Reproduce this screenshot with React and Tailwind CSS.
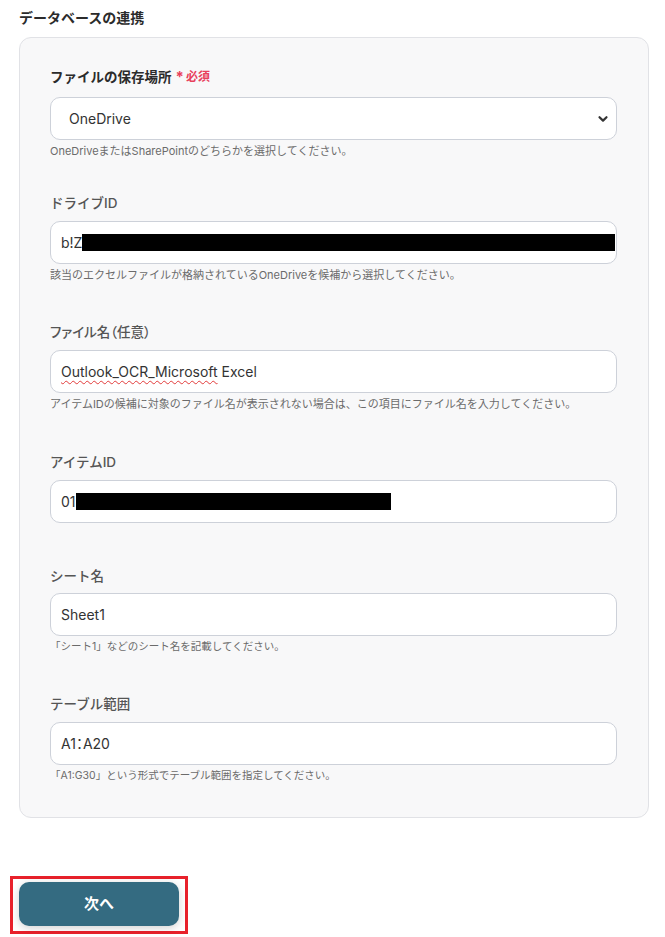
import React from "react";

const fields = [
  {
    id: "location",
    label: "ファイルの保存場所",
    required: true,
    select: true,
    value: "OneDrive",
    help: "OneDriveまたはSharePointのどちらかを選択してください。",
    labelGap: "mb-[10px]",
    after: "mb-[34px]",
  },
  {
    id: "drive",
    label: "ドライブID",
    value: "b!Z",
    redact: "flex-1 -mr-[9px]",
    help: "該当のエクセルファイルが格納されているOneDriveを候補から選択してください。",
    labelGap: "mb-[8px]",
    after: "mb-[39px]",
  },
  {
    id: "file",
    label: "ファイル名（任意）",
    labelPalt: true,
    value: "Outlook_OCR_Microsoft",
    suffix: " Excel",
    wavy: true,
    help: "アイテムIDの候補に対象のファイル名が表示されない場合は、この項目にファイル名を入力してください。",
    labelGap: "mb-[8px]",
    after: "mb-[40px]",
  },
  {
    id: "item",
    label: "アイテムID",
    value: "01",
    redact: "w-[315px]",
    labelGap: "mb-[8px]",
    after: "mb-[43px]",
  },
  {
    id: "sheet",
    label: "シート名",
    value: "Sheet1",
    help: "「シート1」などのシート名を記載してください。",
    small: true,
    labelGap: "mb-[7px]",
    after: "mb-[39px]",
  },
  {
    id: "range",
    label: "テーブル範囲",
    value: "A1：A20",
    valuePalt: true,
    help: "「A1:G30」という形式でテーブル範囲を指定してください。",
    small: true,
    labelGap: "mb-[8px]",
    after: "",
  },
];

const Field = ({ field, first }) => {
  return (
    <div className={field.after}>
      <div className={`flex items-center h-[20px] ${field.labelGap}`}>
        <span
          className={`${
            first
              ? "text-[13.5px] font-bold text-[#2b2b2b]"
              : "text-[13.5px] font-medium text-[#555]"
          } ${field.labelPalt ? "[font-feature-settings:'palt']" : ""}`}
        >
          {field.label}
        </span>
        {field.required && (
          <span className="ml-[4px] text-[12px] font-bold text-[#e8405c]">
            <span className="text-[15px] mr-[2px] align-[-1px]">*</span>必須
          </span>
        )}
      </div>

      {field.select ? (
        <div className="flex items-center justify-between h-[43px] rounded-[10px] border border-[#cdd1d9] bg-white pl-[18px] pr-[7px]">
          <span className="text-[14px] text-[#333]">{field.value}</span>
          <svg width="12" height="12" viewBox="0 0 12 12" fill="none">
            <path
              d="M2.5 4.2 L6 7.6 L9.5 4.2"
              stroke="#333"
              strokeWidth="2.2"
              strokeLinecap="round"
              strokeLinejoin="round"
            />
          </svg>
        </div>
      ) : (
        <div className="flex items-center h-[43px] rounded-[10px] border border-[#cdd1d9] bg-white px-[10px]">
          <span
            className={`text-[14px] text-[#333] whitespace-pre ${
              field.valuePalt ? "[font-feature-settings:'palt']" : ""
            }`}
          >
            {field.wavy ? (
              <span className="underline decoration-wavy decoration-[#e23b3b] underline-offset-[3px] decoration-1">
                {field.value}
              </span>
            ) : (
              field.value
            )}
            {field.suffix}
          </span>
          {field.redact && (
            <div className={`h-[17px] bg-black ${field.redact}`} />
          )}
        </div>
      )}

      {field.help && (
        <p
          className={`mt-[3px] leading-[16px] text-[#6b6b6b] ${
            field.small ? "text-[10.5px]" : "text-[11px]"
          }`}
        >
          {field.help}
        </p>
      )}
    </div>
  );
};

export default function App() {
  return (
    <div
      className="w-[665px] min-h-[937px] bg-white pt-[8px]"
      style={{ fontFamily: 'Inter, "Noto Sans CJK JP", sans-serif' }}
    >
      <h2 className="ml-[19px] h-[20px] leading-[20px] text-[14px] font-bold text-[#2b2b2b]">
        データベースの連携
      </h2>

      <div className="ml-[19px] mr-[16px] mt-[9px] rounded-[12px] border border-[#e1e2e6] bg-[#f8f8f9] pl-[30px] pr-[31px] pt-[29px] pb-[33px]">
        {fields.map((field, i) => (
          <Field key={field.id} field={field} first={i === 0} />
        ))}
      </div>

      <div className="mt-[58px] ml-[10px] w-[178px] border-[3px] border-[#e8212b] pl-[6px] pr-[6px] pt-[3px] pb-[5px]">
        <button className="w-[160px] h-[44px] rounded-[10px] bg-[#346b81] text-white text-[15px] font-bold shadow-[0_2px_8px_rgba(0,0,0,0.18)]">
          次へ
        </button>
      </div>
    </div>
  );
}
